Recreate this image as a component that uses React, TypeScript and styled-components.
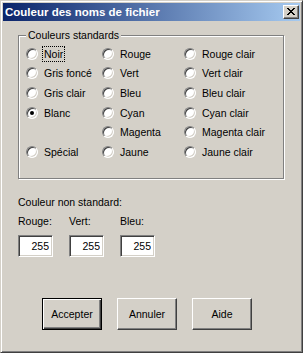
import React from "react";
import styled, { createGlobalStyle, css } from "styled-components";

const FACE = "#d4d0c8";
const SHADOW = "#808080";
const DARK = "#404040";
const FONT = `"Liberation Sans", Arial, sans-serif`;

const GlobalStyle = createGlobalStyle`
  html, body {
    margin: 0;
    padding: 0;
    background: ${FACE};
  }
`;

type Choice = { label: string; checked?: boolean; focused?: boolean } | null;

// column by column, null keeps a cell empty
const choices: Choice[] = [
  { label: "Noir", focused: true },
  { label: "Gris foncé" },
  { label: "Gris clair" },
  { label: "Blanc", checked: true },
  null,
  { label: "Spécial" },
  { label: "Rouge" },
  { label: "Vert" },
  { label: "Bleu" },
  { label: "Cyan" },
  { label: "Magenta" },
  { label: "Jaune" },
  { label: "Rouge clair" },
  { label: "Vert clair" },
  { label: "Bleu clair" },
  { label: "Cyan clair" },
  { label: "Magenta clair" },
  { label: "Jaune clair" },
];

const fields = ["Rouge:", "Vert:", "Bleu:"];

function CloseGlyph() {
  return (
    <svg width="8" height="7" viewBox="0 0 8 7" shapeRendering="crispEdges">
      <path
        d="M0 0h2v1H0z M6 0h2v1H6z M1 1h2v1H1z M5 1h2v1H5z M2 2h4v1H2z M3 3h2v1H3z M2 4h4v1H2z M1 5h2v1H1z M5 5h2v1H5z M0 6h2v1H0z M6 6h2v1H6z"
        fill="#000"
      />
    </svg>
  );
}

export default function App() {
  return (
    <>
      <GlobalStyle />
      <Window>
        <TitleBar>
          <Title>Couleur des noms de fichier</Title>
          <CloseButton>
            <CloseGlyph />
          </CloseButton>
        </TitleBar>

        <Body>
          <GroupBox>
            <Legend>Couleurs standards</Legend>
            <RadioGrid>
              {choices.map((c, i) =>
                c ? (
                  <RadioItem key={i}>
                    <RadioCircle $checked={c.checked} />
                    <RadioLabel $focused={c.focused}>{c.label}</RadioLabel>
                  </RadioItem>
                ) : (
                  <span key={i} />
                )
              )}
            </RadioGrid>
          </GroupBox>

          <SectionLabel>Couleur non standard:</SectionLabel>
          <FieldRow>
            {fields.map((f) => (
              <Field key={f}>
                <FieldLabel>{f}</FieldLabel>
                <NumberBox readOnly value="255" />
              </Field>
            ))}
          </FieldRow>

          <ButtonRow>
            <Button $default>Accepter</Button>
            <Button>Annuler</Button>
            <Button>Aide</Button>
          </ButtonRow>
        </Body>
      </Window>
    </>
  );
}

const Window = styled.div`
  width: 303px;
  height: 353px;
  box-sizing: border-box;
  padding: 2px;
  background: ${FACE};
  border: 1px solid;
  border-color: ${FACE} ${DARK} ${DARK} ${FACE};
  box-shadow: inset 1px 1px 0 #fff, inset -1px -1px 0 ${SHADOW};
  display: flex;
  flex-direction: column;
  font-family: ${FONT};
  font-size: 10.5px;
  color: #000;
`;

const TitleBar = styled.div`
  height: 18px;
  flex: none;
  display: flex;
  align-items: center;
  justify-content: space-between;
  padding: 0 1px 0 2px;
  background: linear-gradient(to right, #0a246a, #a6caf0);
`;

const Title = styled.span`
  color: #fff;
  font-weight: bold;
  font-size: 11.5px;
  line-height: 14px;
  white-space: nowrap;
`;

const CloseButton = styled.div`
  width: 16px;
  height: 14px;
  box-sizing: border-box;
  background: ${FACE};
  border: 1px solid;
  border-color: #fff ${DARK} ${DARK} #fff;
  box-shadow: inset -1px -1px 0 ${SHADOW};
  display: flex;
  align-items: center;
  justify-content: center;
  padding-bottom: 1px;
`;

const Body = styled.div`
  flex: 1;
  display: flex;
  flex-direction: column;
  padding-left: 15px;
`;

const GroupBox = styled.div`
  position: relative;
  margin-top: 14px;
  width: 266px;
  height: 144px;
  box-sizing: border-box;
  border: 1px solid ${SHADOW};
  box-shadow: 1px 1px 0 #fff, inset 1px 1px 0 #fff;
`;

const Legend = styled.span`
  position: absolute;
  top: -7px;
  left: 7px;
  padding: 0 2px;
  background: ${FACE};
  line-height: 13px;
  white-space: nowrap;
`;

const RadioGrid = styled.div`
  display: grid;
  grid-auto-flow: column;
  grid-template-rows: repeat(6, 19.6px);
  grid-template-columns: 76px 82px 1fr;
  padding: 8px 0 0 7px;
`;

const RadioItem = styled.div`
  display: flex;
  align-items: center;
  gap: 5px;
`;

const RadioCircle = styled.span<{ $checked?: boolean }>`
  flex: none;
  width: 12px;
  height: 12px;
  box-sizing: border-box;
  border-radius: 50%;
  background: #fff;
  border: 1px solid;
  border-color: ${SHADOW} #fff #fff ${SHADOW};
  box-shadow: inset 1px 1px 0 ${DARK}, inset -1px -1px 0 ${FACE};
  display: flex;
  align-items: center;
  justify-content: center;

  &::after {
    content: "";
    width: 4px;
    height: 4px;
    border-radius: 50%;
    background: #000;
    display: ${(p) => (p.$checked ? "block" : "none")};
  }
`;

const RadioLabel = styled.span<{ $focused?: boolean }>`
  padding: 1px 1px 0;
  line-height: 13px;
  white-space: nowrap;
  ${(p) =>
    p.$focused &&
    css`
      outline: 1px dotted #000;
    `}
`;

const SectionLabel = styled.div`
  margin-top: 17px;
  line-height: 13px;
`;

const FieldRow = styled.div`
  display: flex;
  gap: 16px;
  margin-top: 6px;
`;

const Field = styled.div`
  display: flex;
  flex-direction: column;
  gap: 7px;
  width: 35px;
`;

const FieldLabel = styled.span`
  line-height: 13px;
`;

const NumberBox = styled.input`
  width: 35px;
  height: 22px;
  box-sizing: border-box;
  margin: 0;
  padding: 0 3px 0 0;
  text-align: right;
  font-family: ${FONT};
  font-size: 10.5px;
  color: #000;
  background: #fff;
  border: 1px solid;
  border-color: ${SHADOW} #fff #fff ${SHADOW};
  box-shadow: inset 1px 1px 0 ${DARK}, inset -1px -1px 0 ${FACE};
  outline: none;
`;

const ButtonRow = styled.div`
  display: flex;
  gap: 15px;
  margin-top: 41px;
  padding-left: 24px;
`;

const Button = styled.button<{ $default?: boolean }>`
  width: 60px;
  height: 32px;
  box-sizing: border-box;
  margin: 0;
  padding: 0;
  background: ${FACE};
  font-family: ${FONT};
  font-size: 10.5px;
  color: #000;
  border: 1px solid;
  border-color: #fff ${DARK} ${DARK} #fff;
  box-shadow: inset -1px -1px 0 ${SHADOW};

  ${(p) =>
    p.$default &&
    css`
      border-color: #000;
      box-shadow: inset 1px 1px 0 #fff, inset -1px -1px 0 ${DARK},
        inset -2px -2px 0 ${SHADOW};
    `}
`;
